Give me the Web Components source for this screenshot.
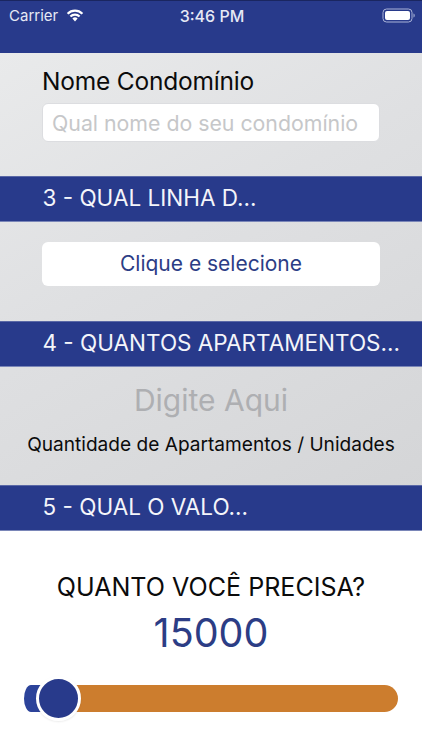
<!DOCTYPE html>
<html lang="pt">
<head>
<meta charset="utf-8">
<title>Condomínio</title>
<style>
    html, body { margin: 0; padding: 0; background: #fff; }
    body { width: 422px; height: 750px; overflow: hidden; font-family: Inter, "Liberation Sans", sans-serif; }
</style>
</head>
<body>
<app-screen>
    <status-bar></status-bar>
    <form-panel height="123" pad="17">
        <name-field label="Nome Condomínio" placeholder="Qual nome do seu condomínio"></name-field>
    </form-panel>
    <section-bar>3 - QUAL LINHA D...</section-bar>
    <form-panel height="99" pad="20">
        <select-button>Clique e selecione</select-button>
    </form-panel>
    <section-bar>4 - QUANTOS APARTAMENTOS...</section-bar>
    <form-panel height="118" pad="14">
        <count-field placeholder="Digite Aqui" caption="Quantidade de Apartamentos / Unidades"></count-field>
    </form-panel>
    <section-bar>5 - QUAL O VALO...</section-bar>
    <amount-slider label="QUANTO VOCÊ PRECISA?" value="15000"></amount-slider>
</app-screen>

<script>
class AppScreen extends HTMLElement {
    constructor() {
        super();
        this.attachShadow({mode: "open"}).innerHTML = `
        <style>
            :host { display: block; width: 422px; height: 750px; position: relative; overflow: hidden; }
            .shade {
                position: absolute; left: 0; top: 53px; width: 422px; height: 478px; z-index: 0;
                background: linear-gradient(150deg, #e9eaeb 0%, #dfe0e2 40%, #d3d4d6 100%);
            }
            .flow { position: relative; z-index: 1; display: flex; flex-direction: column; height: 100%; }
        </style>
        <div class="shade"></div>
        <div class="flow"><slot></slot></div>`;
    }
}

class StatusBar extends HTMLElement {
    constructor() {
        super();
        this.attachShadow({mode: "open"}).innerHTML = `
        <style>
            :host {
                display: block; height: 53px; box-sizing: border-box; flex: none; position: relative;
                background: #283a8b; color: #e6e9f5; border-top: 1px solid #1a2660;
                font-size: 15px;
            }
            .row { height: 29px; display: grid; grid-template-columns: 1fr auto 1fr; align-items: center; padding: 0 7px 0 9px; }
            .left { display: flex; align-items: center; gap: 8px; }
            .time { font-weight: 500; font-size: 16px; }
            .right { justify-self: end; display: flex; }
            svg { display: block; }
        </style>
        <div class="row">
            <div class="left">
                <span>Carrier</span>
                <svg width="18" height="13" viewBox="0 0 18 13">
                    <path d="M1.600 4.700A10.500 10.500 0 0 1 16.400 4.700" fill="none" stroke="#fff" stroke-width="2.200"/>
                    <path d="M4.400 7.500A6.500 6.500 0 0 1 13.600 7.500" fill="none" stroke="#fff" stroke-width="2.200"/>
                    <path d="M6.400 9.600A3.700 3.700 0 0 1 11.600 9.600L9 12.500z" fill="#fff"/>
                </svg>
            </div>
            <div class="time">3:46 PM</div>
            <div class="right">
                <svg width="33" height="15" viewBox="0 0 33 15">
                    <rect x="1" y="1" width="29" height="13" rx="3.500" fill="none" stroke="#aab3d8" stroke-width="1"/>
                    <rect x="3" y="3" width="25" height="9" rx="2" fill="#fff"/>
                    <path d="M31.500 5.500c.8.2 1.200 1 1.200 2s-.4 1.800-1.200 2z" fill="#aab3d8"/>
                </svg>
            </div>
        </div>`;
    }
}

class FormPanel extends HTMLElement {
    constructor() {
        super();
        this.attachShadow({mode: "open"});
    }
    connectedCallback() {
        this.shadowRoot.innerHTML = `
        <style>
            :host {
                display: block; flex: none; box-sizing: border-box;
                height: ${this.getAttribute("height")}px;
                padding-top: ${this.getAttribute("pad")}px;
            }
        </style>
        <slot></slot>`;
    }
}

class NameField extends HTMLElement {
    constructor() {
        super();
        this.attachShadow({mode: "open"});
    }
    connectedCallback() {
        this.shadowRoot.innerHTML = `
        <style>
            :host { display: block; padding: 0 42px 0 43px; }
            label { display: block; font-size: 24.500px; line-height: 23px; height: 33px; color: #0b0b0b; letter-spacing: -0.2px; margin-left: -1px; }
            .box {
                box-sizing: border-box; width: 338px; height: 39px; margin-left: -1px;
                background: #fff; border: 1px solid #dcdde0; border-radius: 6px;
                padding-left: 9px; display: flex; align-items: center;
                font-size: 21.300px; color: #c6c7c9; white-space: nowrap;
            }
        </style>
        <label>${this.getAttribute("label")}</label>
        <div class="box">${this.getAttribute("placeholder")}</div>`;
    }
}

class SectionBar extends HTMLElement {
    constructor() {
        super();
        this.attachShadow({mode: "open"}).innerHTML = `
        <style>
            :host {
                display: flex; align-items: center; flex: none; box-sizing: border-box;
                height: 46px; padding: 0 0 3px 42.500px;
                background: #283a8b; color: #f4f5fa;
                border-top: 1px solid #5a68a6; border-bottom: 1px solid #7a86b8;
                font-size: 22.500px; white-space: nowrap;
            }
        </style>
        <slot></slot>`;
    }
}

class SelectButton extends HTMLElement {
    constructor() {
        super();
        this.attachShadow({mode: "open"}).innerHTML = `
        <style>
            :host {
                display: flex; align-items: center; justify-content: center;
                box-sizing: border-box; width: 338px; height: 44px; margin-left: 42px;
                background: #fff; border-radius: 6px; color: #2c3d85; font-size: 21px; padding-bottom: 1px;
            }
        </style>
        <slot></slot>`;
    }
}

class CountField extends HTMLElement {
    constructor() {
        super();
        this.attachShadow({mode: "open"});
    }
    connectedCallback() {
        this.shadowRoot.innerHTML = `
        <style>
            :host { display: flex; flex-direction: column; align-items: center; gap: 13px; }
            .ph { font-size: 30px; line-height: 38px; color: #aeafb2; }
            .cap { font-size: 19.100px; line-height: 24px; color: #0b0b0b; white-space: nowrap; }
        </style>
        <div class="ph">${this.getAttribute("placeholder")}</div>
        <div class="cap">${this.getAttribute("caption")}</div>`;
    }
}

class AmountSlider extends HTMLElement {
    constructor() {
        super();
        this.attachShadow({mode: "open"});
    }
    connectedCallback() {
        this.shadowRoot.innerHTML = `
        <style>
            :host { display: flex; flex-direction: column; align-items: center; flex: 1; background: #fff; padding-top: 42px; }
            .label { font-size: 25.100px; line-height: 28px; color: #0b0b0b; white-space: nowrap; }
            .value { font-size: 39.500px; line-height: 44px; color: #2c3d85; margin-top: 10px; }
            .track {
                position: relative; align-self: flex-start; display: flex;
                width: 374px; height: 27px; margin: 30px 0 0 24px;
                border-radius: 7px 13.500px 13.500px 7px / 13.500px; overflow: hidden;
            }
            .min { width: 34px; background: #2c439a; }
            .max { flex: 1; background: #cc7d2e; }
            .wrap { position: relative; align-self: stretch; }
            .thumb {
                position: absolute; left: 36px; top: -36px; box-sizing: border-box;
                width: 45px; height: 45px; border-radius: 50%;
                background: #283a8b; border: 3px solid #fff;
                box-shadow: 0 1px 2px rgba(0,0,0,.08);
            }
        </style>
        <div class="label">${this.getAttribute("label")}</div>
        <div class="value">${this.getAttribute("value")}</div>
        <div class="track"><div class="min"></div><div class="max"></div></div>
        <div class="wrap"><div class="thumb"></div></div>`;
    }
}

customElements.define("app-screen", AppScreen);
customElements.define("status-bar", StatusBar);
customElements.define("form-panel", FormPanel);
customElements.define("name-field", NameField);
customElements.define("section-bar", SectionBar);
customElements.define("select-button", SelectButton);
customElements.define("count-field", CountField);
customElements.define("amount-slider", AmountSlider);
</script>
</body>
</html>
